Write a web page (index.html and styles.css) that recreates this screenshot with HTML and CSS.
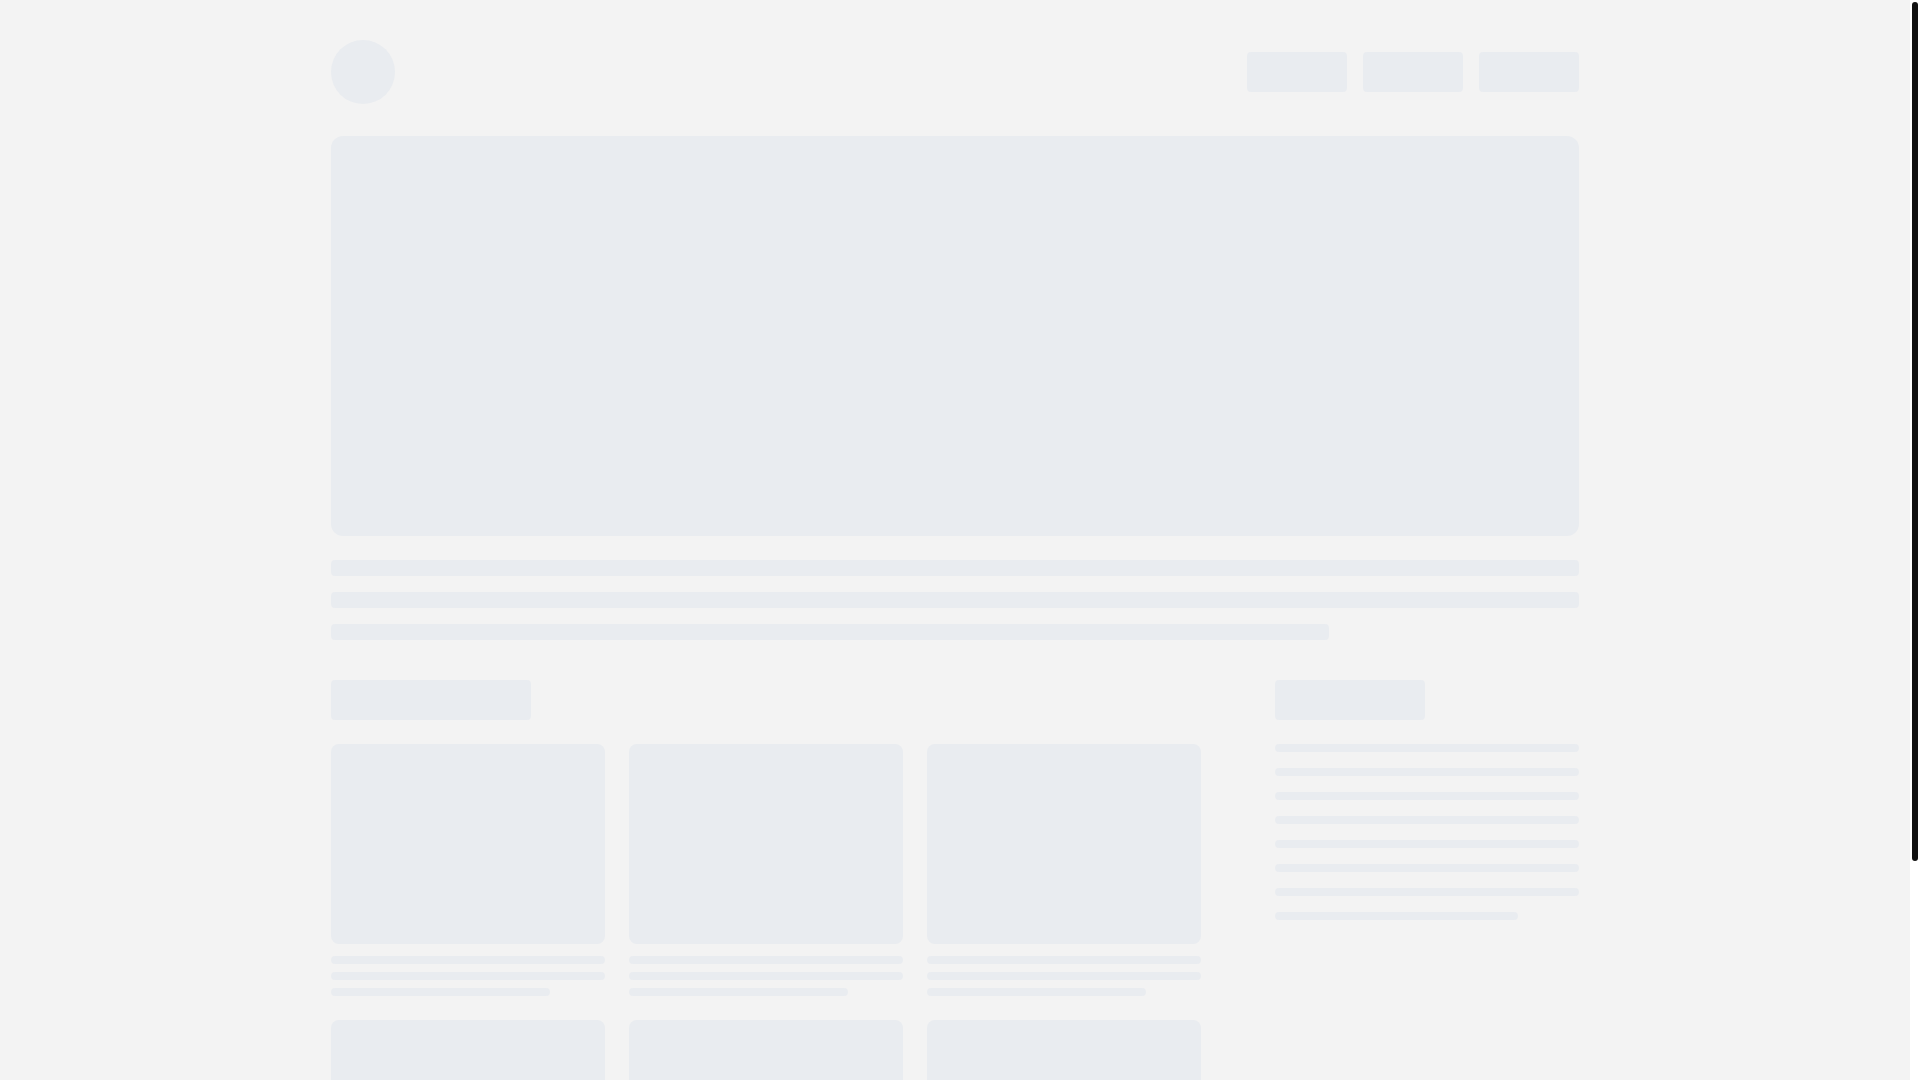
FILE: index.html
```html
<!DOCTYPE html>
<html lang="en">
<head>
<meta charset="utf-8">
<title>Loading</title>
<link rel="stylesheet" href="styles.css">
</head>
<body>
<div class="page">
  <header class="header">
    <div class="sk logo"></div>
    <nav class="nav">
      <div class="sk nav-item"></div>
      <div class="sk nav-item"></div>
      <div class="sk nav-item"></div>
    </nav>
  </header>
  <div class="sk hero"></div>
  <div class="intro">
    <div class="sk line-lg"></div>
    <div class="sk line-lg"></div>
    <div class="sk line-lg short"></div>
  </div>
  <div class="layout">
    <main class="main">
      <div class="sk heading main-heading"></div>
      <div class="cards">
        <div class="card">
          <div class="sk card-img"></div>
          <div class="card-lines">
            <div class="sk line-sm"></div>
            <div class="sk line-sm"></div>
            <div class="sk line-sm short"></div>
          </div>
        </div>
        <div class="card">
          <div class="sk card-img"></div>
          <div class="card-lines">
            <div class="sk line-sm"></div>
            <div class="sk line-sm"></div>
            <div class="sk line-sm short"></div>
          </div>
        </div>
        <div class="card">
          <div class="sk card-img"></div>
          <div class="card-lines">
            <div class="sk line-sm"></div>
            <div class="sk line-sm"></div>
            <div class="sk line-sm short"></div>
          </div>
        </div>
        <div class="card">
          <div class="sk card-img"></div>
          <div class="card-lines">
            <div class="sk line-sm"></div>
            <div class="sk line-sm"></div>
            <div class="sk line-sm short"></div>
          </div>
        </div>
        <div class="card">
          <div class="sk card-img"></div>
          <div class="card-lines">
            <div class="sk line-sm"></div>
            <div class="sk line-sm"></div>
            <div class="sk line-sm short"></div>
          </div>
        </div>
        <div class="card">
          <div class="sk card-img"></div>
          <div class="card-lines">
            <div class="sk line-sm"></div>
            <div class="sk line-sm"></div>
            <div class="sk line-sm short"></div>
          </div>
        </div>
      </div>
    </main>
    <aside class="aside">
      <div class="sk heading aside-heading"></div>
      <div class="aside-lines">
        <div class="sk line-sm"></div>
        <div class="sk line-sm"></div>
        <div class="sk line-sm"></div>
        <div class="sk line-sm"></div>
        <div class="sk line-sm"></div>
        <div class="sk line-sm"></div>
        <div class="sk line-sm"></div>
        <div class="sk line-sm short"></div>
      </div>
    </aside>
  </div>
</div>
<div class="scrollbar" aria-hidden="true">
  <div class="scrollbar-thumb"></div>
</div>
</body>
</html>
```

FILE: styles.css
```css
html {
  background: #f3f3f3;
  scrollbar-width: none;
}
body {
  margin: 0;
  padding-right: 10px;
  background: #f3f3f3;
  font-family: "Liberation Sans", Arial, sans-serif;
}
.page {
  width: 1248px;
  margin: 0 auto;
  padding: 40px 0 80px;
}
.sk {
  background: #e9ecf0;
}
.header {
  display: flex;
  align-items: center;
  justify-content: space-between;
  height: 64px;
  margin-bottom: 32px;
}
.logo {
  width: 64px;
  height: 64px;
  border-radius: 50%;
}
.nav {
  display: flex;
  gap: 16px;
}
.nav-item {
  width: 100px;
  height: 40px;
  border-radius: 4px;
}
.hero {
  height: 400px;
  border-radius: 12px;
}
.intro {
  display: flex;
  flex-direction: column;
  gap: 16px;
  margin-top: 24px;
}
.line-lg {
  height: 16px;
  border-radius: 4px;
}
.short {
  width: 80%;
}
.layout {
  display: grid;
  grid-template-columns: 1fr 304px;
  column-gap: 74px;
  margin-top: 40px;
}
.heading {
  height: 40px;
  border-radius: 4px;
  margin-bottom: 24px;
}
.main-heading {
  width: 200px;
}
.aside-heading {
  width: 150px;
}
.cards {
  display: grid;
  grid-template-columns: repeat(3, 1fr);
  gap: 24px;
}
.card-img {
  height: 200px;
  border-radius: 8px;
}
.card-lines {
  display: flex;
  flex-direction: column;
  gap: 8px;
  margin-top: 12px;
}
.line-sm {
  height: 8px;
  border-radius: 4px;
}
.aside-lines {
  display: flex;
  flex-direction: column;
  gap: 16px;
}
.scrollbar {
  position: fixed;
  top: 0;
  right: 0;
  width: 10px;
  height: 100vh;
  background: #ffffff;
}
.scrollbar-thumb {
  margin: 2px;
  height: 859px;
  background: #111111;
  border-radius: 3px;
}
```
